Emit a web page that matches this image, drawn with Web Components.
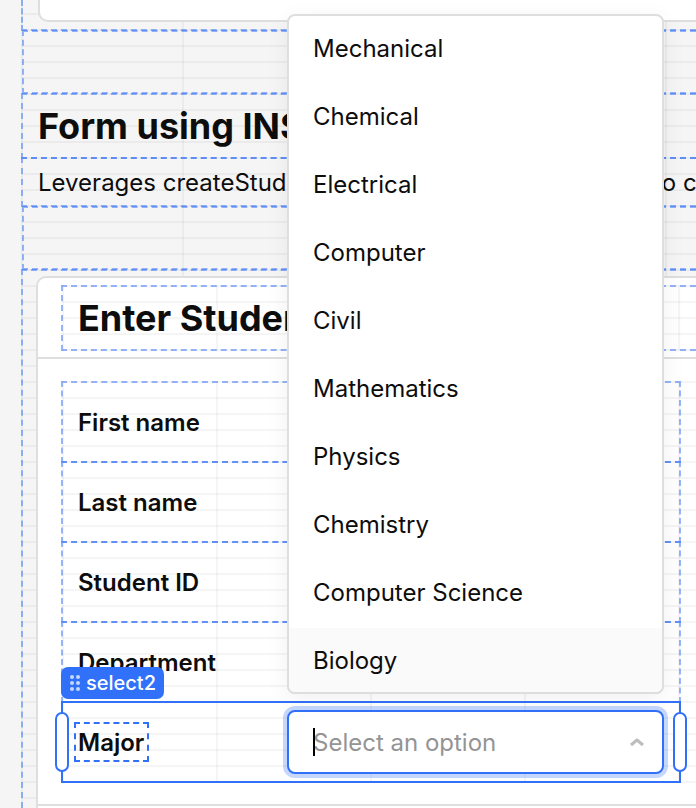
<!DOCTYPE html>
<html lang="en">
<head>
<meta charset="utf-8">
<title>Student form editor</title>
<style>
  :root {
    --accent: #3170f9;
    --dash: rgba(49, 112, 249, .5);
    --line: #dedede;
    --grid: rgba(0, 0, 0, .04);
    --ink: #0d0d0d;
  }
  html, body { margin: 0; background: #f5f5f5; }
  body {
    font-family: Inter, "Liberation Sans", sans-serif;
    font-size: 24px;
    line-height: 32px;
    color: var(--ink);
  }
</style>
</head>
<body>
<editor-canvas>
  <canvas-widget kind="lead"><panel-card kind="lead"></panel-card></canvas-widget>
  <canvas-widget kind="spacer"></canvas-widget>
  <canvas-widget kind="title"><h2>Form using INSERT</h2></canvas-widget>
  <canvas-widget kind="text"><p>Leverages createStudent SQL query on a form submit to c</p></canvas-widget>
  <canvas-widget kind="spacer"></canvas-widget>
  <canvas-widget kind="form">
    <panel-card kind="form">
      <canvas-widget slot="header" kind="heading"><h2>Enter Student</h2></canvas-widget>
      <form-field label="First name" name="first"></form-field>
      <form-field label="Last name" name="last"></form-field>
      <form-field label="Student ID" name="sid"></form-field>
      <form-field label="Department" name="dept"></form-field>
      <form-field label="Major" name="major" selected tag="select2" placeholder="Select an option">
        <option-menu options="Mechanical,Chemical,Electrical,Computer,Civil,Mathematics,Physics,Chemistry,Computer Science,Biology"></option-menu>
      </form-field>
    </panel-card>
  </canvas-widget>
</editor-canvas>

<script>
class Base extends HTMLElement {
  connectedCallback() {
    if (this.shadowRoot) return;
    this.attachShadow({ mode: 'open' }).innerHTML =
      `<style>*{box-sizing:border-box}${this.css()}</style>${this.html()}`;
  }
  css() { return ''; }
  html() { return '<slot></slot>'; }
}

customElements.define('editor-canvas', class extends Base {
  css() { return `
    :host {
      display: flex; flex-direction: column; box-sizing: border-box;
      margin-left: 21px; min-height: 100vh;
      background-image:
        linear-gradient(var(--grid) 2px, transparent 2px),
        linear-gradient(90deg, var(--grid) 2px, transparent 2px);
      background-size: 100% 16px, 161px 100%;
      background-position: 0 13px, 0 0;
    }`; }
});

customElements.define('canvas-widget', class extends Base {
  css() { return `
    :host { display: block; box-sizing: border-box; border: 2px dashed var(--dash); border-right: 0; }
    :host([kind=lead]) { height: 31px; padding: 0 0 7px 15px; border-top: 0; }
    :host([kind=spacer]) { height: 64px; margin: -1px 0 -1px 1px; }
    :host([kind=title]) { padding: 9px 0 9px 15px; }
    :host([kind=text]) { padding: 8px 0 6px 15px; margin-top: -2px; }
    :host([kind=form]) { display: flex; flex: 1 0 auto; padding: 5px 0 0 13px; border-bottom: 0; }
    :host([kind=heading]) { padding: 9px 0 9px 15px; }
    ::slotted(panel-card) { flex: 1; }
    ::slotted(h2) { margin: 0; font-size: 36px; line-height: 44px; font-weight: 700; white-space: nowrap; }
    ::slotted(p) { margin: 0; white-space: nowrap; overflow: hidden; }`; }
});

customElements.define('panel-card', class extends Base {
  css() { return `
    :host { display: block; box-sizing: border-box; background: #fff; border: 2px solid var(--line); border-right: 0; }
    :host([kind=lead]) { height: 100%; border-top: 0; border-bottom-left-radius: 10px; }
    :host([kind=form]) { border-bottom: 0; border-top-left-radius: 10px; }
    header { padding: 7px 0 6px 23px; border-bottom: 2px solid var(--line); }
    .body { padding: 22px 0 21px 23px; border-bottom: 2px solid var(--line); }
    .grid {
      background-image:
        linear-gradient(var(--grid) 2px, transparent 2px),
        linear-gradient(90deg, var(--grid) 2px, transparent 2px);
      background-size: 100% 16px, 154px 100%;
      background-position: 0 0, 1px 0;
    }
    .fields { display: flex; flex-direction: column; padding-right: 15px; }`; }
  html() {
    return this.getAttribute('kind') === 'lead' ? '' : `
      <header><div class="grid"><slot name="header"></slot></div></header>
      <div class="body"><div class="grid fields"><slot></slot></div></div>`;
  }
});

customElements.define('form-field', class extends Base {
  css() { return `
    :host { display: block; position: relative; box-sizing: border-box; height: 82px;
      border: 2px dashed var(--dash); padding: 7px 15px; margin-bottom: -2px; }
    :host([selected]) { border: 2px solid var(--accent); margin-bottom: 0; }
    .row { display: grid; grid-template-columns: 209fr 377fr; align-items: center; height: 64px; }
    label { justify-self: start; font-weight: 600; border: 2px dashed transparent;
      padding: 3px 3px 1px 2px; margin-left: -4px; }
    :host([selected]) label { border-color: var(--accent); }
    .control { position: relative; }
    input { display: block; width: 100%; height: 64px; padding: 0 24px; margin: 0; outline: 0;
      border: 2px solid var(--line); border-radius: 8px; background: #fff; font: inherit; color: inherit; }
    input::placeholder { color: #949494; opacity: 1; }
    :host([selected]) input { border-color: var(--accent); box-shadow: 0 0 0 4px rgba(49,112,249,.28); }
    .caret { position: absolute; left: 26px; top: 18px; width: 2px; height: 28px; background: #000; }
    .chevron { position: absolute; right: 20px; top: 26px; }
    .handle { position: absolute; top: 9px; width: 14px; height: 60px; border: 2px solid var(--accent);
      border-radius: 7px; background: #fff; }
    .left { left: -8px; } .right { right: -8px; }
    .tag { position: absolute; left: -2px; top: -36px; height: 32px; padding: 0 8px; border-radius: 7px;
      display: flex; align-items: center; gap: 6px; background: var(--accent); color: #fff;
      font-size: 20px; line-height: 32px; font-weight: 500; }`; }
  html() {
    const a = n => this.getAttribute(n) || '';
    const sel = this.hasAttribute('selected');
    const dots = [0, 6].flatMap(x => [0, 6, 12].map(y => `<circle cx="${x + 3}" cy="${y + 2}" r="2"/>`)).join('');
    return `
      <div class="row">
        <label for="${a('name')}">${a('label')}</label>
        <div class="control">
          <input id="${a('name')}" type="text" placeholder="${a('placeholder')}" ${sel ? 'role="combobox" aria-expanded="true"' : ''}>
          ${sel ? `<span class="caret"></span>
          <svg class="chevron" width="14" height="12" viewBox="0 0 14 12" fill="none" stroke="#bdbdbd" stroke-width="3" stroke-linecap="butt" stroke-linejoin="round"><path d="M1 9 7 4 13 9"/></svg>
          <slot></slot>` : ''}
        </div>
      </div>
      ${sel ? `<span class="handle left"></span><span class="handle right"></span>
      <span class="tag"><svg width="11" height="16" viewBox="0 0 11 16" fill="#c5d7fd">${dots}</svg>${a('tag')}</span>` : ''}`;
  }
});

customElements.define('option-menu', class extends Base {
  css() { return `
    :host { position: absolute; left: 0; right: 0; bottom: 80px; z-index: 5; box-sizing: border-box;
      background: #fff; border: 2px solid var(--line); border-radius: 8px; overflow: hidden;
      box-shadow: 0 6px 24px rgba(0,0,0,.06); }
    ul { list-style: none; margin: 0; padding: 0; display: flex; flex-direction: column; gap: 4px; }
    li { padding: 17px 24px 15px; }
    li:last-child { background: #fafafa; }`; }
  html() {
    const items = this.getAttribute('options').split(',');
    return `<ul role="listbox">${items.map((t, i) =>
      `<li role="option" aria-selected="${i === items.length - 1}">${t}</li>`).join('')}</ul>`;
  }
});
</script>
</body>
</html>
